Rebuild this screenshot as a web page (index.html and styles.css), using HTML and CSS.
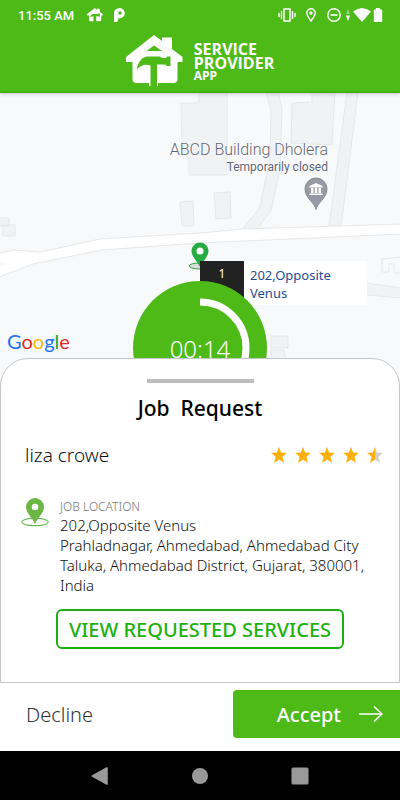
FILE: index.html
```html
<!DOCTYPE html>
<html lang="en">
<head>
    <meta charset="UTF-8">
    <meta name="viewport" content="width=device-width, initial-scale=1.0">
    <title>Job Request | Service Provider App</title>
    <link rel="stylesheet" href="styles.css">
</head>
<body>
    <header class="app-header">
        <div class="status-bar">
            <span class="clock">11:55 AM</span>
            <svg class="status-home" width="16" height="14" viewBox="0 0 57 51"><path d="M28 0 36 6V2.500H46V14L56.500 22V27H51.500V44Q51.500 48 47.500 48H33V30H41L46 33V20H40L36 22H20Q14 24 10 33L23 30V48H10.500Q6.500 48 6.500 44V27H0V22z" fill="#fff"/></svg>
            <svg class="status-p" width="12" height="14" viewBox="0 0 12 14"><path d="M0 14V5.200A5.400 5.200 0 1 1 5.500 10.400L4 10.200V12Q4 14 2 14zM6 3.300a1.700 1.700 0 1 0 0 3.400 1.700 1.700 0 0 0 0-3.400z" fill="#fff" fill-rule="evenodd"/></svg>
            <div class="status-icons">
                <svg width="18" height="14" viewBox="0 0 18 14" fill="none" stroke="#fff"><path d="M6 1h6v12H6z" stroke-width="1.500"/><path d="M3.500 3v8M14.500 3v8M1 5v4M17 5v4" stroke-width="1.400"/></svg>
                <svg class="gap-pin" width="10" height="14" viewBox="0 0 10 14"><path d="M5 13C3 10 .8 7.500.8 5a4.200 4.200 0 0 1 8.400 0C9.200 7.500 7 10 5 13z" fill="none" stroke="#fff" stroke-width="1.400"/><circle cx="5" cy="5" r="1.700" fill="#fff"/></svg>
                <svg class="gap-dnd" width="14" height="14" viewBox="0 0 14 14" fill="none" stroke="#fff"><circle cx="7" cy="7" r="6.200" stroke-width="1.400"/><path d="M3.500 7h7" stroke-width="1.600"/></svg>
                <svg class="gap-data" width="4" height="12" viewBox="0 0 4 12"><path d="M2 0 4 5H0z" fill="#8fd673"/><path d="M2 12 0 6.500h4z" fill="#fff"/></svg>
                <svg width="18" height="14" viewBox="0 0 18 14"><path d="M9 14 0 3.500Q9-3.500 18 3.500z" fill="#fff"/></svg>
                <svg width="10" height="14" viewBox="0 0 10 14"><path d="M3 0h4v1.500h1.500q.7 0 .7.800v11q0 .7-.7.700h-7q-.7 0-.7-.7v-11q0-.8.7-.8H3z" fill="#fff"/></svg>
            </div>
        </div>
        <div class="brand">
            <svg width="58" height="52" viewBox="0 0 58 52">
                <!-- house -->
                <path d="M28 0 36 6V2.500H46V14L56.500 22V27H51.500V44Q51.500 48 47.500 48H32V51H23V48H10.500Q6.500 48 6.500 44V27H0V22z" fill="#fff"/>
                <path d="M28 10.500 36 16H20.500z" fill="#4dba18"/>
                <!-- hammer -->
                <path d="M10.700 34.500C12 28 15 22.500 21 21.500H34L36 23H40L41 21.500H44.500V31H41L39 29.500H31V52H24.500V30.500C19 28.500 15 30 10.700 34.500z" fill="#4dba18"/>
            </svg>
            <div class="brand-name">
                <span>SERVICE</span>
                <span>PROVIDER</span>
                <small>APP</small>
            </div>
        </div>
    </header>

    <main>
        <section class="map" aria-label="Map">
            <svg class="map-canvas" viewBox="0 93 400 305" preserveAspectRatio="xMidYMin slice">
                <rect x="-400" y="93" width="1200" height="305" fill="#f8f9fb"/>
                <g fill="#f1f2f4" stroke="#e6e7ea" stroke-width="1">
                    <!-- side roads -->
                    <path d="M266 92 271 111 270 157 260 207 242 230H256L271 211 280 168 282 108 278 92z"/>
                    <path d="M347 92 329 227H341L358 92z"/>
                    <path d="M366 283 401 288V298L366 295z"/>
                    <!-- buildings -->
                    <path d="M199 92V103H181L182 152 189 159V175H227V92z"/>
                    <path d="M312 92V102L292 103 291 143 332 145 335 92z"/>
                    <path d="M214 193 230 192 231 218 216 219z"/>
                    <path d="M180 202 193 201 194 226 182 226z"/>
                    <path d="M-1 218H9V226H-1zM3 225H15V236H3z"/>
                    <path d="M271 336H288V348H271zM271 350H284L286 362H272z"/>
                    <path d="M382 259 401 257V273H394V264H389V272H382z" fill="#f8f9fb"/>
                </g>
                <!-- main road -->
                <path d="M-1 253 14 250 40 252 100 239 200 233 243 229 401 224V234L200 243 102 250 33 264 -1 277z" fill="#fff" stroke="#e6e7ea"/>
                <path d="M-1 264H3" stroke="#e6e7ea"/>
            </svg>

            <div class="place">
                <span class="place-name">ABCD Building Dholera</span>
                <span class="place-note">Temporarily closed</span>
            </div>
            <svg class="place-pin" width="24" height="33" viewBox="0 0 24 33">
                <path d="M12 32.500C11 26 1 21 1 12a11 11 0 0 1 22 0c0 9-10 14-11 20.500z" fill="#979ba5" stroke="#858993"/>
                <path d="M12 6 5.500 9v1.500h13V9zM7 11h2.500v5H7zM10.800 11h2.400v5h-2.400zM14.500 11H17v5h-2.500zM5.500 16.500h13V18h-13z" fill="#fff"/>
            </svg>

            <svg class="job-pin" width="24" height="28" viewBox="0 0 24 28">
                <ellipse cx="12" cy="24" rx="11" ry="3" fill="#ddd" stroke="#27ab43"/>
                <path d="M12 25C10 20 3.500 15 3.500 9a8.500 8.500 0 0 1 17 0c0 6-6.500 11-8.500 16z" fill="#27ab43"/>
                <circle cx="12" cy="9" r="3.500" fill="#fff"/>
            </svg>
            <div class="map-label">
                <span class="map-label-number">1</span>
                <span class="map-label-text">202,Opposite Venus</span>
            </div>

            <div class="google"><span class="g-blue">G</span><span class="g-red">o</span><span class="g-yellow">o</span><span class="g-blue">g</span><span class="g-green">l</span><span class="g-red">e</span></div>

            <div class="timer">
                <svg class="timer-ring" viewBox="0 0 134 134"><path d="M67 21a46 46 0 0 1 0 92" fill="none" stroke="#fff" stroke-width="7"/></svg>
                <span class="timer-value">00:14</span>
            </div>
        </section>

        <section class="sheet">
            <div class="handle"></div>
            <h1>Job  Request</h1>

            <div class="customer">
                <span class="customer-name">liza crowe</span>
                <div class="stars" role="img" aria-label="4.5 out of 5">
                    <svg viewBox="0 0 18 18"><path d="M9 1l2.200 5.800H17l-4.600 3.900L14 17l-5-3.500L4 17l1.600-6.300L1 6.800h5.800z" fill="#ffae0c"/></svg>
                    <svg viewBox="0 0 18 18"><path d="M9 1l2.200 5.800H17l-4.600 3.900L14 17l-5-3.500L4 17l1.600-6.300L1 6.800h5.800z" fill="#ffae0c"/></svg>
                    <svg viewBox="0 0 18 18"><path d="M9 1l2.200 5.800H17l-4.600 3.900L14 17l-5-3.500L4 17l1.600-6.300L1 6.800h5.800z" fill="#ffae0c"/></svg>
                    <svg viewBox="0 0 18 18"><path d="M9 1l2.200 5.800H17l-4.600 3.900L14 17l-5-3.500L4 17l1.600-6.300L1 6.800h5.800z" fill="#ffae0c"/></svg>
                    <svg viewBox="0 0 18 18"><path d="M9 1l2.200 5.800H17l-4.600 3.900L14 17l-5-3.500z" fill="#d0d0d0"/><path d="M9 1v12.500L4 17l1.600-6.300L1 6.800h5.800z" fill="#ffae0c"/></svg>
                </div>
            </div>

            <div class="location">
                <svg width="28" height="29" viewBox="0 0 28 29">
                    <ellipse cx="14" cy="24" rx="13.300" ry="3.800" fill="none" stroke="#3fae2a"/>
                    <path d="M14 26C12 20.500 5 15 5 9a9 9 0 0 1 18 0c0 6-7 11.500-9 17z" fill="#6cb644"/>
                    <circle cx="14" cy="9" r="3.300" fill="#fff"/>
                </svg>
                <div class="address">
                    <h2>JOB LOCATION</h2>
                    <p>202,Opposite Venus<br>Prahladnagar, Ahmedabad, Ahmedabad City Taluka, Ahmedabad District, Gujarat, 380001, India</p>
                </div>
            </div>

            <button type="button" class="services-btn">VIEW REQUESTED SERVICES</button>
        </section>
    </main>

    <div class="actions">
        <button type="button" class="decline-btn">Decline</button>
        <button type="button" class="accept-btn">
            Accept
            <svg width="24" height="18" viewBox="0 0 24 18" fill="none" stroke="#fff" stroke-width="1.500"><path d="M0 9h23M15 1.500 23 9l-8 7.500"/></svg>
        </button>
    </div>

    <nav class="nav-bar">
        <button type="button" aria-label="Back"><svg width="18" height="18" viewBox="0 0 18 18"><path d="M1 8.200 15.500.3q1.300-.5 1.300.7v16q0 1.200-1.300.7L1 9.800q-1-.8 0-1.600z" fill="#999"/></svg></button>
        <button type="button" aria-label="Home"><svg width="18" height="18" viewBox="0 0 18 18"><circle cx="9" cy="9" r="8" fill="#999"/></svg></button>
        <button type="button" aria-label="Recent apps"><svg width="18" height="18" viewBox="0 0 18 18"><rect x=".5" y=".5" width="17" height="17" rx="1.500" fill="#999"/></svg></button>
    </nav>
</body>
</html>
```
FILE: styles.css
```css
* {
    margin: 0;
    padding: 0;
    box-sizing: border-box;
}

body {
    font-family: 'Noto Sans', 'Open Sans', sans-serif;
    background: #fff;
    color: #111;
    min-height: 100vh;
    display: flex;
    flex-direction: column;
}

svg {
    display: block;
    flex-shrink: 0;
}

button {
    font-family: inherit;
    border: none;
    background: none;
    cursor: pointer;
}

main {
    flex: 1;
    display: flex;
    flex-direction: column;
}

/* Header */
.app-header {
    background: #4dba18;
    color: #fff;
    border-bottom: 1px solid #35a80c;
    box-shadow: 0 1px 4px rgba(0,0,0,0.2);
    position: relative;
    z-index: 1;
}

.status-bar {
    display: flex;
    align-items: center;
    height: 30px;
    padding: 0 17px 0 18px;
}

.clock {
    font-family: Roboto, sans-serif;
    font-size: 13px;
    font-weight: 500;
}

.status-home {
    margin-left: 13px;
}

.status-p {
    margin-left: 11px;
}

.status-icons {
    display: flex;
    align-items: center;
    margin-left: auto;
}

.gap-pin {
    margin-left: 10px;
}

.gap-dnd {
    margin-left: 11px;
}

.gap-data {
    margin: 0 3px 0 5px;
}

.status-icons svg:last-child {
    margin-left: 2px;
}

.brand {
    display: flex;
    justify-content: center;
    gap: 10px;
    padding: 5px 0;
}

.brand-name {
    display: flex;
    flex-direction: column;
    padding-top: 7px;
    font-family: 'Open Sans', sans-serif;
    font-size: 16px;
    font-weight: 700;
    line-height: 14px;
}

.brand-name small {
    font-size: 12px;
    line-height: 12px;
}

/* Map */
.map {
    position: relative;
    height: 305px;
    overflow: hidden;
}

.map-canvas {
    width: 100%;
    height: 100%;
}

.place {
    position: absolute;
    top: 48px;
    right: calc(50% - 128px);
    display: flex;
    flex-direction: column;
    align-items: flex-end;
    font-family: Roboto, sans-serif;
    color: #5f6672;
    white-space: nowrap;
    text-shadow: 0 0 2px #fff, 0 0 2px #fff;
}

.place-name {
    font-size: 16px;
    font-weight: 350;
    line-height: 18px;
}

.place-note {
    font-size: 12px;
    line-height: 16px;
}

.place-pin {
    position: absolute;
    top: 84px;
    left: calc(50% + 104px);
}

.job-pin {
    position: absolute;
    top: 149px;
    left: calc(50% - 12px);
}

.map-label {
    position: absolute;
    top: 168px;
    left: 50%;
    display: flex;
    width: 167px;
    height: 44px;
    background: #fff;
    border-radius: 2px;
}

.map-label-number {
    width: 44px;
    padding-top: 4px;
    background: #222;
    color: #fff;
    font-size: 12px;
    line-height: 18px;
    text-align: center;
}

.map-label-text {
    flex: 1;
    padding: 5px 20px 0 6px;
    color: #1f4c94;
    font-size: 13px;
    line-height: 18px;
}

.google {
    position: absolute;
    top: 236px;
    left: 7px;
    font-family: Lato, sans-serif;
    font-size: 20px;
    line-height: 24px;
}

.g-blue { color: #1a73f0; }
.g-red { color: #e8281e; }
.g-yellow { color: #fbb508; }
.g-green { color: #1c9e3a; }

.timer {
    position: absolute;
    top: 188px;
    left: calc(50% - 67px);
    width: 134px;
    height: 134px;
    border-radius: 50%;
    background: #4dba18;
    display: grid;
    place-items: center;
}

.timer-ring,
.timer-value {
    grid-area: 1 / 1;
}

.timer-ring {
    width: 134px;
}

.timer-value {
    color: #fff;
    font-size: 24px;
    font-weight: 350;
}

/* Job sheet */
.sheet {
    position: relative;
    flex: 1;
    margin-top: -40px;
    padding: 20px 20px 33px;
    background: #fff;
    border: 1px solid #c6c6c6;
    border-radius: 28px 28px 0 0;
}

.handle {
    width: 107px;
    height: 4px;
    margin: 0 auto;
    background: #bdbdbd;
}

.sheet h1 {
    margin-top: 11px;
    color: #000;
    font-size: 21px;
    font-weight: 500;
    line-height: 28px;
    text-align: center;
    white-space: pre;
}

.customer {
    display: flex;
    align-items: center;
    justify-content: space-between;
    margin: 20px -5px 0 4px;
}

.customer-name {
    font-size: 19px;
    font-weight: 350;
    line-height: 26px;
}

.stars {
    display: flex;
    gap: 6px;
}

.stars svg {
    width: 18px;
    height: 18px;
}

.location {
    display: flex;
    gap: 11px;
    margin: 30px -8px 0 0;
}

.address h2 {
    color: #777;
    font-size: 12px;
    font-weight: 300;
    line-height: 17px;
}

.address p {
    font-size: 15px;
    font-weight: 350;
    line-height: 20px;
}

.services-btn {
    display: block;
    width: 288px;
    height: 40px;
    margin: 14px 0 0 35px;
    border: 2px solid #1eb010;
    border-radius: 6px;
    color: #1eb010;
    font-size: 20px;
    font-weight: 500;
    white-space: nowrap;
}

/* Decline / accept */
.actions {
    display: flex;
    align-items: center;
    justify-content: space-between;
    padding: 7px 0 13px 26px;
}

.decline-btn {
    color: #333;
    font-size: 20px;
    font-weight: 300;
}

.accept-btn {
    display: flex;
    align-items: center;
    gap: 18px;
    height: 48px;
    padding: 0 17px 0 44px;
    border-radius: 4px 0 0 4px;
    background: #4dba18;
    color: #fff;
    font-size: 20px;
    font-weight: 500;
}

/* System navigation */
.nav-bar {
    display: flex;
    align-items: center;
    justify-content: center;
    gap: 82px;
    height: 49px;
    background: #000;
}

.nav-bar button {
    display: block;
}
```
